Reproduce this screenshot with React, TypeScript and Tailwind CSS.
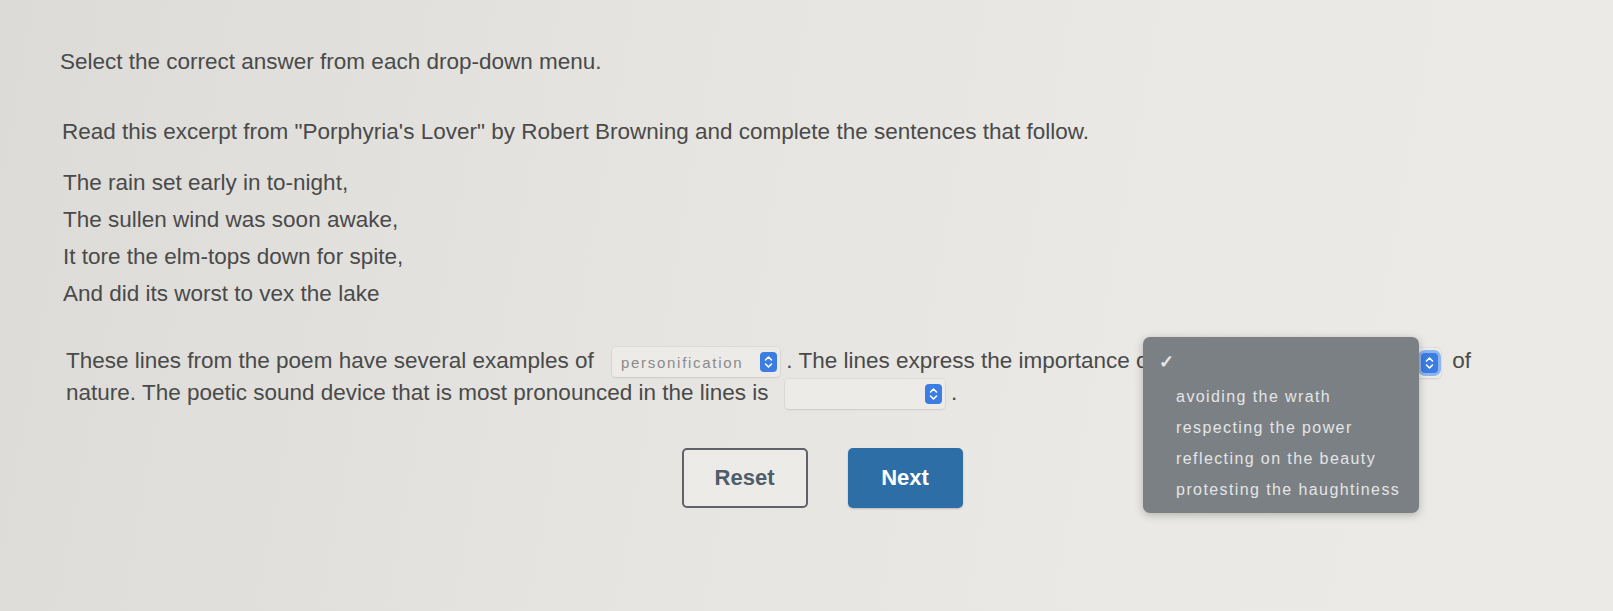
import React from "react";

function UpDown({ ring = false }: { ring?: boolean }) {
  return (
    <span
      className={
        "inline-flex items-center justify-center rounded-[4px] bg-[#3b7de0] w-[17px] h-[20px] " +
        (ring ? "ring-[3px] ring-[#8fb5ee]" : "")
      }
    >
      <svg width="9" height="14" viewBox="0 0 9 14" fill="none">
        <path d="M1.5 5 L4.5 2 L7.5 5" stroke="white" strokeWidth="1.6" strokeLinecap="round" strokeLinejoin="round" />
        <path d="M1.5 9 L4.5 12 L7.5 9" stroke="white" strokeWidth="1.6" strokeLinecap="round" strokeLinejoin="round" />
      </svg>
    </span>
  );
}

function Select({ value, width, ring }: { value?: string; width: string; ring?: boolean }) {
  return (
    <span
      className={
        "inline-flex items-center justify-between h-[30px] align-middle rounded-[4px] bg-[#ecebe8] shadow-[0_0_0_1px_rgba(0,0,0,0.04),0_1px_2px_rgba(0,0,0,0.08)] pl-[9px] pr-[3px] " +
        width
      }
    >
      <span className="text-[15px] tracking-[1.7px] text-[#8a8a8a] leading-none">{value ?? ""}</span>
      <UpDown ring={ring} />
    </span>
  );
}

export default function App() {
  const options = [
    "avoiding the wrath",
    "respecting the power",
    "reflecting on the beauty",
    "protesting the haughtiness",
  ];
  return (
    <div
      className="w-[1613px] h-[611px] overflow-hidden bg-[linear-gradient(100deg,#dcdbd7_0%,#e4e3df_35%,#eae9e5_70%,#ebeae6_100%)] text-[#4a4a4a] text-[22.5px]"
      style={{ fontFamily: '"Liberation Sans", Arial, sans-serif' }}
    >
      <div className="pl-[60px] pt-[47px]">
        <p className="leading-[30px]">Select the correct answer from each drop-down menu.</p>
        <p className="leading-[30px] mt-[40px] pl-[2px]">
          Read this excerpt from "Porphyria's Lover" by Robert Browning and complete the sentences that follow.
        </p>
        <div className="mt-[17px] pl-[3px] leading-[37px]">
          <p>The rain set early in to-night,</p>
          <p>The sullen wind was soon awake,</p>
          <p>It tore the elm-tops down for spite,</p>
          <p>And did its worst to vex the lake</p>
        </div>
        <p className="mt-[34px] pl-[6px] leading-[30px]">
          These lines from the poem have several examples of{" "}
          <span className="ml-[12px]">
            <Select value="personification" width="w-[168px]" />
          </span>{" "}
          . The lines express the importance of{" "}
          <span className="relative inline-block align-middle">
            <Select width="w-[280px]" ring />
            <span className="absolute left-[-18px] top-[-10px] w-[276px] h-[176px] rounded-[7px] bg-[#7b8084] shadow-[0_2px_8px_rgba(0,0,0,0.25)] pt-[10px] pl-[16px] z-10">
              <span className="flex h-[31px] items-center text-[#e6e7e8] text-[18px] font-bold">✓</span>
              <span className="block mt-[4px]">
                {options.map((o) => (
                  <span
                    key={o}
                    className="flex h-[31px] items-center pl-[17px] text-[16px] tracking-[1.4px] font-medium text-[#e4e5e6]"
                  >
                    {o}
                  </span>
                ))}
              </span>
            </span>
          </span>{" "}
          <span className="ml-[5px]">of</span>
          <br />
          nature. The poetic sound device that is most pronounced in the lines is{" "}
          <span className="ml-[10px]">
            <Select width="w-[160px]" />
          </span>{" "}
          .
        </p>
        <div className="mt-[39px] flex justify-center gap-[40px] pr-[29px]">
          <button className="w-[126px] h-[60px] rounded-[5px] border-[2px] border-[#5f6368] bg-[#ecebe8] text-[#4f5d69] font-bold text-[22px]">
            Reset
          </button>
          <button className="w-[115px] h-[60px] rounded-[5px] bg-[#2e6ea6] text-white font-bold text-[22px] shadow-[0_1px_2px_rgba(0,0,0,0.2)]">
            Next
          </button>
        </div>
      </div>
    </div>
  );
}
